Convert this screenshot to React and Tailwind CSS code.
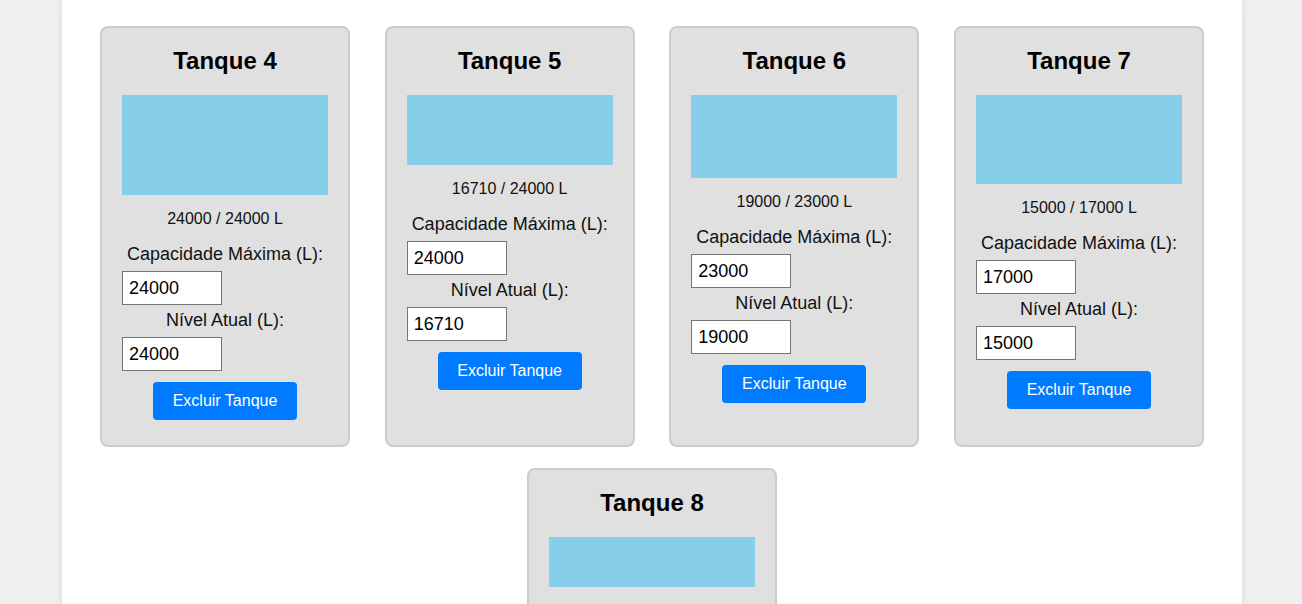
import React, { useState } from "react";

const initialTanks = [
  { id: 4, capacity: 24000, level: 24000 },
  { id: 5, capacity: 24000, level: 16710 },
  { id: 6, capacity: 23000, level: 19000 },
  { id: 7, capacity: 17000, level: 15000 },
  { id: 8, capacity: 20000, level: 10000 }
];

function TankCard({ tank, onChange, onDelete }) {
  const pct = tank.capacity > 0 ? Math.min(tank.level / tank.capacity, 1) : 0;
  const barHeight = Math.ceil(pct * 100);

  return (
    <div className="w-[250px] border-2 border-[#cccccc] rounded-lg bg-[#e0e0e0] px-[20px] pt-[19px] pb-[25px] text-center">
      <h2 className="text-[24px] leading-[28px] font-bold text-black">
        Tanque {tank.id}
      </h2>

      {/* nivel do tanque */}
      <div
        className="mt-[20px] w-full bg-[#87ceeb]"
        style={{ height: barHeight }}
      />

      <p className="mt-[15px] text-[16px] leading-[18px] text-[#111]">
        {tank.level} / {tank.capacity} L
      </p>

      <label className="block mt-[16px] text-[18px] leading-[21px] text-[#111]">
        Capacidade Máxima (L):
      </label>
      <input
        type="number"
        value={tank.capacity}
        onChange={e => onChange(tank.id, "capacity", Number(e.target.value))}
        className="block mt-[6px] w-[100px] h-[34px] border border-[#767676] bg-white px-[6px] text-[18px] text-black outline-none [appearance:textfield] [&::-webkit-inner-spin-button]:appearance-none"
      />

      <label className="block mt-[5px] text-[18px] leading-[21px] text-[#111]">
        Nível Atual (L):
      </label>
      <input
        type="number"
        value={tank.level}
        onChange={e => onChange(tank.id, "level", Number(e.target.value))}
        className="block mt-[6px] w-[100px] h-[34px] border border-[#767676] bg-white px-[6px] text-[18px] text-black outline-none [appearance:textfield] [&::-webkit-inner-spin-button]:appearance-none"
      />

      <button
        onClick={() => onDelete(tank.id)}
        className="mt-[11px] h-[38px] w-[144px] rounded bg-[#007bff] text-[16px] text-white"
      >
        Excluir Tanque
      </button>
    </div>
  );
}

export default function App() {
  const [tanks, setTanks] = useState(initialTanks);

  const updateTank = (id, field, value) => {
    setTanks(prev => prev.map(t => (t.id === id ? { ...t, [field]: value } : t)));
  };

  const deleteTank = id => {
    setTanks(prev => prev.filter(t => t.id !== id));
  };

  return (
    <div className="min-h-screen bg-[#f0f0f0] font-['Liberation_Sans',Arial,sans-serif]">
      <div className="ml-[62px] w-[1180px] min-h-screen bg-white shadow-[0_0_10px_rgba(0,0,0,0.1)] pt-[26px] pb-[20px]">
        <div className="flex flex-wrap justify-center gap-x-[34.67px] gap-y-[21px]">
          {tanks.map(tank => (
            <TankCard
              key={tank.id}
              tank={tank}
              onChange={updateTank}
              onDelete={deleteTank}
            />
          ))}
        </div>
      </div>
    </div>
  );
}
